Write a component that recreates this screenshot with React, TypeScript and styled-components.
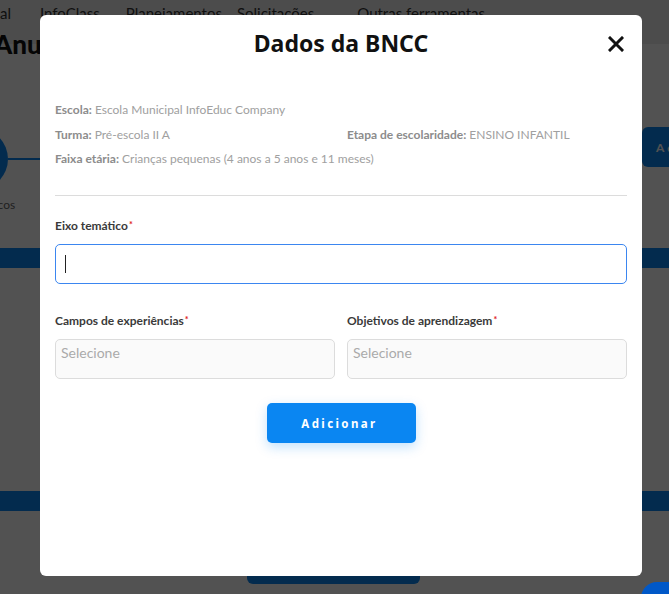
import React from "react";
import styled, { createGlobalStyle } from "styled-components";

const GlobalStyle = createGlobalStyle`
  html, body {
    margin: 0;
    padding: 0;
    background: #ffffff;
  }
  body {
    font-family: Lato, "Noto Sans", sans-serif;
    overflow: hidden;
  }
`;

const PRIMARY = "#0a86f2";

// ---------- background page (dimmed by the overlay) ----------

const Page = styled.div`
  width: 669px;
  height: 594px;
  overflow: hidden;
  display: flex;
  flex-direction: column;
  background: #ffffff;
`;

const TopBar = styled.div`
  height: 44px;
  flex-shrink: 0;
  background: #ececec;
  display: flex;
  flex-direction: column;
`;

const Nav = styled.nav`
  display: flex;
  gap: 26px;
  height: 26px;
  padding-top: 4px;
  align-items: center;
  font-size: 15px;
  color: #333;
`;

const NavItem = styled.span<{ $gap?: number }>`
  white-space: nowrap;
  margin-left: ${(p) => p.$gap ?? 0}px;
`;

const PageTitle = styled.h1`
  margin: 7px 0 0 -6px;
  font-size: 26px;
  line-height: 30px;
  font-weight: 900;
  color: #111;
  white-space: nowrap;
`;

const StepRow = styled.div`
  margin-top: 83px;
  height: 64px;
  display: flex;
  align-items: center;
`;

const StepCircle = styled.div`
  width: 62px;
  height: 62px;
  margin-left: -54px;
  border-radius: 50%;
  background: ${PRIMARY};
  flex-shrink: 0;
`;

const StepLine = styled.div`
  width: 60px;
  height: 2px;
  background: ${PRIMARY};
`;

const SideButton = styled.div`
  align-self: flex-start;
  margin-left: auto;
  margin-right: -80px;
  width: 107px;
  height: 40px;
  border-radius: 6px;
  background: ${PRIMARY};
  color: #fff;
  font-weight: 700;
  font-size: 12px;
  letter-spacing: 3px;
  display: flex;
  align-items: center;
  padding-left: 14px;
  box-sizing: border-box;
`;

const StepLabel = styled.div`
  margin: 6px 0 0 -43px;
  font-size: 12px;
  color: #666;
`;

const Band = styled.div<{ $top: number }>`
  margin-top: ${(p) => p.$top}px;
  height: 20px;
  background: ${PRIMARY};
  flex-shrink: 0;
`;

const BottomButton = styled.div`
  margin: 50px 0 0 247px;
  width: 173px;
  height: 23px;
  border-radius: 0 0 6px 6px;
  background: ${PRIMARY};
  flex-shrink: 0;
`;

// ---------- overlay + modal ----------

const Overlay = styled.div`
  position: fixed;
  inset: 0;
  background: rgba(0, 0, 0, 0.68);
  padding: 15px 0 0 40px;
  box-sizing: border-box;
`;

const Modal = styled.div`
  position: relative;
  width: 602px;
  height: 561px;
  background: #fff;
  border-radius: 6px;
  padding: 14px 15px 0;
  box-sizing: border-box;
  display: flex;
  flex-direction: column;
`;

const Header = styled.div`
  display: flex;
  justify-content: center;
`;

const Title = styled.h2`
  margin: 0;
  font-family: "Noto Sans", "Open Sans", sans-serif;
  font-size: 23px;
  line-height: 28px;
  font-weight: 700;
  color: #111;
`;

const CloseButton = styled.button`
  position: absolute;
  top: 18px;
  right: 15px;
  width: 22px;
  height: 22px;
  padding: 0;
  border: 0;
  background: none;
  display: flex;
  align-items: center;
  justify-content: center;
  cursor: pointer;
`;

const InfoGrid = styled.div`
  margin-top: 45px;
  display: grid;
  grid-template-columns: 292px 1fr;
  row-gap: 8.5px;
  font-size: 12px;
  line-height: 16px;
  color: #a0a0a0;
`;

const InfoItem = styled.div<{ $wide?: boolean }>`
  grid-column: ${(p) => (p.$wide ? "1 / -1" : "auto")};
  white-space: nowrap;

  b {
    font-weight: 700;
    color: #8c8c8c;
  }
`;

const Divider = styled.hr`
  margin: 28px 0 0;
  border: 0;
  border-top: 1px solid #dcdcdc;
`;

const FieldRow = styled.div<{ $top: number }>`
  margin-top: ${(p) => p.$top}px;
  display: grid;
  grid-template-columns: 1fr 1fr;
  column-gap: 12px;
`;

const Field = styled.div<{ $wide?: boolean }>`
  grid-column: ${(p) => (p.$wide ? "1 / -1" : "auto")};
  display: flex;
  flex-direction: column;
`;

const Label = styled.label`
  font-size: 12px;
  line-height: 16px;
  font-weight: 700;
  color: #3a3a3a;
  margin-bottom: 10px;
`;

const Required = styled.sup`
  color: #e02020;
  font-size: 9px;
  line-height: 0;
  vertical-align: 2px;
  margin-left: 1px;
`;

const TextBox = styled.div`
  height: 40px;
  border: 1px solid #3b86f0;
  border-radius: 5px;
  box-sizing: border-box;
  display: flex;
  align-items: center;
  padding-left: 9px;
`;

const Caret = styled.span`
  width: 1px;
  height: 18px;
  background: #222;
`;

const Select = styled.div`
  height: 40px;
  border: 1px solid #dcdcdc;
  border-radius: 5px;
  background: #fafafa;
  box-sizing: border-box;
  padding: 4px 0 0 5px;
  font-size: 14px;
  line-height: 18px;
  color: #aaaaaa;
`;

const Actions = styled.div`
  margin-top: 24px;
  display: flex;
  justify-content: center;
`;

const PrimaryButton = styled.button`
  width: 149px;
  height: 40px;
  border: 0;
  border-radius: 5px;
  background: ${PRIMARY};
  color: #fff;
  font-family: "Noto Sans", "Open Sans", sans-serif;
  font-size: 11.5px;
  font-weight: 700;
  letter-spacing: 2.4px;
  padding-left: 3px;
  box-shadow: 0 4px 12px rgba(10, 134, 242, 0.25);
  cursor: pointer;
`;

const ChatBubble = styled.div`
  position: fixed;
  left: 641px;
  top: 582px;
  width: 60px;
  height: 60px;
  border-radius: 16px;
  background: #0058c8;
`;

export default function App() {
  return (
    <>
      <GlobalStyle />
      <Page>
        <TopBar>
          <Nav>
            <NavItem>al</NavItem>
            <NavItem $gap={3}>InfoClass</NavItem>
            <NavItem $gap={0}>Planejamentos</NavItem>
            <NavItem $gap={-11}>Solicitações</NavItem>
            <NavItem $gap={17}>Outras ferramentas</NavItem>
          </Nav>
          <PageTitle>Anual</PageTitle>
        </TopBar>
        <StepRow>
          <StepCircle />
          <StepLine />
          <SideButton>Adicionar</SideButton>
        </StepRow>
        <StepLabel>Específicos</StepLabel>
        <Band $top={36} />
        <Band $top={223} />
        <BottomButton />
      </Page>

      <Overlay>
        <Modal>
          <Header>
            <Title>Dados da BNCC</Title>
          </Header>
          <CloseButton aria-label="Fechar">
            <svg width="16" height="16" viewBox="0 0 16 16">
              <path d="M2 2L14 14M14 2L2 14" stroke="#111" strokeWidth="3" strokeLinecap="square" />
            </svg>
          </CloseButton>

          <InfoGrid>
            <InfoItem $wide>
              <b>Escola:</b> Escola Municipal InfoEduc Company
            </InfoItem>
            <InfoItem>
              <b>Turma:</b> Pré-escola II A
            </InfoItem>
            <InfoItem>
              <b>Etapa de escolaridade:</b> ENSINO INFANTIL
            </InfoItem>
            <InfoItem $wide>
              <b>Faixa etária:</b> Crianças pequenas (4 anos a 5 anos e 11 meses)
            </InfoItem>
          </InfoGrid>

          <Divider />

          <FieldRow $top={22}>
            <Field $wide>
              <Label>
                Eixo temático<Required>*</Required>
              </Label>
              <TextBox>
                <Caret />
              </TextBox>
            </Field>
          </FieldRow>

          <FieldRow $top={29}>
            <Field>
              <Label>
                Campos de experiências<Required>*</Required>
              </Label>
              <Select>Selecione</Select>
            </Field>
            <Field>
              <Label>
                Objetivos de aprendizagem<Required>*</Required>
              </Label>
              <Select>Selecione</Select>
            </Field>
          </FieldRow>

          <Actions>
            <PrimaryButton>Adicionar</PrimaryButton>
          </Actions>
        </Modal>
      </Overlay>
      <ChatBubble />
    </>
  );
}
